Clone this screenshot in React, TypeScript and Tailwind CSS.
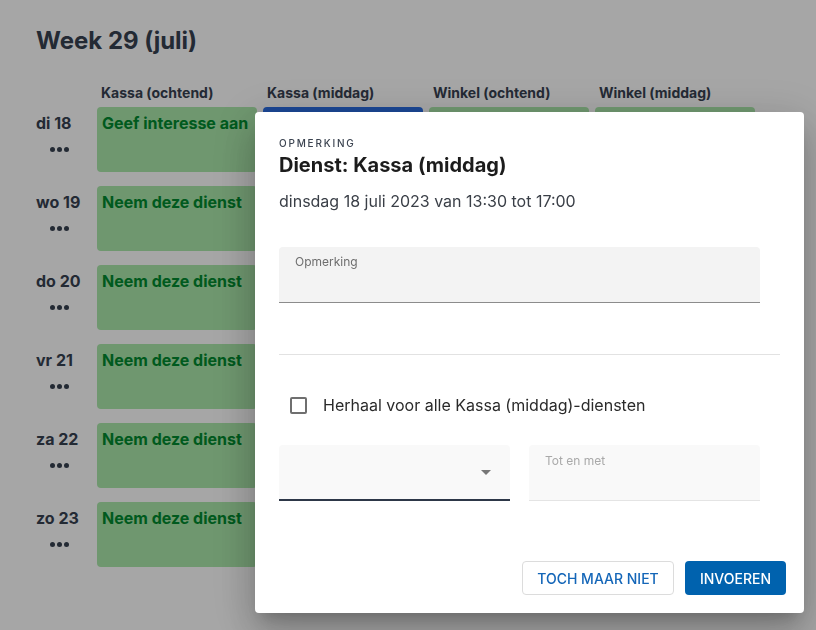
import React from 'react';

const columns = ['Kassa (ochtend)', 'Kassa (middag)', 'Winkel (ochtend)', 'Winkel (middag)'];

const days = [
  { label: 'di 18', first: 'Geef interesse aan' },
  { label: 'wo 19', first: 'Neem deze dienst' },
  { label: 'do 20', first: 'Neem deze dienst' },
  { label: 'vr 21', first: 'Neem deze dienst' },
  { label: 'za 22', first: 'Neem deze dienst' },
  { label: 'zo 23', first: 'Neem deze dienst' },
];

const Dots: React.FC = () => (
  <div className="mt-[12px] ml-[14px] flex gap-[2px]">
    <span className="h-[5px] w-[5px] rounded-full bg-[#374151]" />
    <span className="h-[5px] w-[5px] rounded-full bg-[#374151]" />
    <span className="h-[5px] w-[5px] rounded-full bg-[#374151]" />
  </div>
);

// cellen achter de dialoog blijven leeg
const Cell: React.FC<{ text?: string; selected?: boolean }> = ({ text, selected }) => (
  <div
    className={`h-[65px] rounded px-[5px] pt-[4px] text-[16px] leading-6 font-bold ${
      selected ? 'bg-[#2a6de4] text-white' : 'bg-[#abe8ab] text-[#008a2e]'
    }`}
  >
    {text}
  </div>
);

const Schedule: React.FC = () => (
  <div className="pl-[36px] pt-[25px]">
    <h1 className="text-[24px] leading-8 font-bold text-[#374151]">Week 29 (juli)</h1>

    <div className="mt-[26px] grid grid-cols-[55px_160px_160px_160px_160px] gap-x-[6px]">
      <div />
      {columns.map((col) => (
        <div key={col} className="pl-[4px] text-[14px] leading-5 font-bold text-[#374151]">
          {col}
        </div>
      ))}
    </div>

    <div className="mt-[4px] grid grid-cols-[55px_160px_160px_160px_160px] gap-x-[6px] gap-y-[14px]">
      {days.map((day, i) => (
        <React.Fragment key={day.label}>
          <div className="pt-[4px]">
            <div className="text-[16px] leading-6 font-bold text-[#374151]">{day.label}</div>
            <Dots />
          </div>
          <Cell text={day.first} />
          <Cell selected={i === 0} />
          <Cell />
          <Cell />
        </React.Fragment>
      ))}
    </div>
  </div>
);

const CommentDialog: React.FC = () => (
  <div className="fixed top-[112px] left-[255px] w-[549px] rounded bg-white px-[24px] pt-[23px] pb-[18px] shadow-[0px_11px_15px_-7px_rgba(0,0,0,0.2),0px_24px_38px_3px_rgba(0,0,0,0.14),0px_9px_46px_8px_rgba(0,0,0,0.12)]">
    <div className="text-[10px] leading-4 font-medium tracking-[0.18em] text-[#3b4350]">OPMERKING</div>
    <h2 className="text-[20px] leading-7 font-bold text-[#1c1c1c]">Dienst: Kassa (middag)</h2>
    <p className="mt-[10px] text-[16px] leading-6 text-[#3a3f47]">dinsdag 18 juli 2023 van 13:30 tot 17:00</p>

    {/* opmerking veld */}
    <div className="mt-[34px] h-[56px] w-[481px] rounded-t-[4px] border-b border-[#8c8c8c] bg-[#f3f3f3] px-[16px] pt-[7px]">
      <div className="text-[12px] leading-4 text-[#6e6e6e]">Opmerking</div>
    </div>

    <div className="mt-[51px] h-px bg-[#e2e2e2]" />

    {/* herhalen */}
    <label className="mt-[38px] flex h-[24px] items-center pl-[11px]">
      <span className="h-[17px] w-[17px] rounded-[2px] border-2 border-[#6f6f6f]" />
      <span className="ml-[16px] text-[16px] leading-6 text-[#2a2a2a]">Herhaal voor alle Kassa (middag)-diensten</span>
    </label>

    <div className="mt-[28px] grid w-[481px] grid-cols-2 gap-x-[19px]">
      <div className="flex h-[56px] items-center justify-end rounded-t-[4px] border-b-2 border-[#2d3748] bg-[#f9f9f9] pr-[19px]">
        <svg width="10" height="5" viewBox="0 0 10 5">
          <path d="M0 0 L10 0 L5 5 Z" fill="#777777" />
        </svg>
      </div>
      <div className="h-[56px] rounded-t-[4px] border-b border-[#e4e4e4] bg-[#f9f9f9] px-[16px] pt-[8px]">
        <div className="text-[12px] leading-4 text-[#a9a9a9]">Tot en met</div>
      </div>
    </div>

    <div className="mt-[60px] -mr-[6px] flex justify-end gap-[11px]">
      <button className="h-[34px] w-[152px] rounded border border-[#dcdcdc] bg-white text-[14px] font-medium text-[#1466b8]">
        TOCH MAAR NIET
      </button>
      <button className="h-[34px] w-[101px] rounded bg-[#0062ae] text-[14px] font-medium text-white">
        INVOEREN
      </button>
    </div>
  </div>
);

export default function App() {
  return (
    <div className="relative h-[630px] w-[816px] overflow-hidden bg-white font-['Inter',sans-serif]">
      <Schedule />
      <div className="fixed inset-0 bg-black/35" />
      <CommentDialog />
    </div>
  );
}
